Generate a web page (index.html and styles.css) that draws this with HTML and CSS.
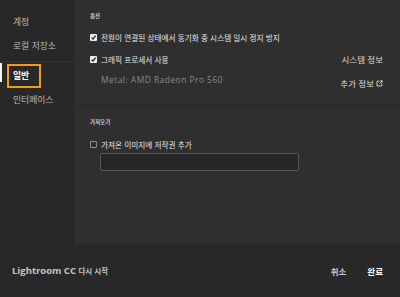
FILE: index.html
```html
<!DOCTYPE html>
<html lang="ko">
<head>
<meta charset="utf-8">
<title>환경 설정</title>
<link rel="stylesheet" href="styles.css">
</head>
<body>
<div class="app">
  <div class="main-area">
    <nav class="sidebar">
      <div class="nav-item">계정</div>
      <div class="nav-item">로컬 저장소</div>
      <div class="nav-sep"></div>
      <div class="nav-item active"><span class="focus">일반</span></div>
      <div class="nav-item">인터페이스</div>
    </nav>
    <main class="panel">
      <section class="sec sec-options">
        <h3 class="sec-title">옵션</h3>
        <div class="sec-body">
          <div class="opts">
            <label class="check"><span class="box checked"><svg viewBox="0 0 7 7" width="7" height="7"><path d="M1.6 3.6 L3 5.1 L5.6 1.6" fill="none" stroke="#1e1e1e" stroke-width="1.3"/></svg></span>전원이 연결된 상태에서 동기화 중 시스템 일시 정지 방지</label>
            <label class="check"><span class="box checked"><svg viewBox="0 0 7 7" width="7" height="7"><path d="M1.6 3.6 L3 5.1 L5.6 1.6" fill="none" stroke="#1e1e1e" stroke-width="1.3"/></svg></span>그래픽 프로세서 사용</label>
            <div class="note">Metal: AMD Radeon Pro 560</div>
          </div>
          <div class="links">
            <a class="link">시스템 정보</a>
            <a class="link">추가 정보<svg class="ext" viewBox="0 0 7 7" width="7" height="7"><path d="M3.5 1.2 H1 V6 H5.8 V3.5" fill="none" stroke="#dcdcdc" stroke-width="0.9"/><path d="M3.4 3.6 L6.2 0.8 M4.3 0.8 H6.2 V2.7" fill="none" stroke="#dcdcdc" stroke-width="0.9"/></svg></a>
          </div>
        </div>
      </section>
      <section class="sec sec-import">
        <h3 class="sec-title">가져오기</h3>
        <label class="check"><span class="box"></span>가져온 이미지에 저작권 추가</label>
        <div class="field"></div>
      </section>
    </main>
  </div>
  <footer class="footer">
    <span class="restart">Lightroom CC <span class="ko">다시 시작</span></span>
    <div class="actions">
      <span class="btn cancel">취소</span>
      <span class="btn done">완료</span>
    </div>
  </footer>
</div>
</body>
</html>
```
FILE: styles.css
```css
html, body {
  margin: 0;
  padding: 0;
  background: #282828;
}
body {
  font-family: "Noto Sans CJK KR", "Noto Sans", sans-serif;
  color: #e0e0e0;
}
.app {
  width: 400px;
  height: 297px;
  display: flex;
  flex-direction: column;
  background: #282828;
}
.main-area {
  display: flex;
  height: 244px;
}
.sidebar {
  width: 74px;
  flex: none;
  padding-top: 10px;
  box-sizing: border-box;
  background: #282828;
}
.nav-item {
  position: relative;
  height: 24px;
  line-height: 24px;
  padding-left: 13px;
  font-size: 8.8px;
  color: #b8b8b8;
  white-space: nowrap;
}
.nav-sep {
  height: 1px;
  margin-top: 3px;
  margin-bottom: 2px;
  background: #333333;
}
.nav-item.active {
  padding-left: 7px;
  color: #ffffff;
  font-weight: bold;
}
.nav-item.active::before {
  content: "";
  position: absolute;
  left: 0;
  top: -1px;
  width: 2px;
  height: 19px;
  background: #f2f2f2;
}
.focus {
  display: inline-block;
  box-sizing: border-box;
  width: 34px;
  height: 24px;
  line-height: 20px;
  padding-left: 4px;
  border: 2px solid #f39c12;
  vertical-align: top;
}
.panel {
  flex: 1;
  background: #2f2f2f;
}
.sec {
  box-sizing: border-box;
  padding: 11px 17px 0 16px;
}
.sec-options {
  height: 106px;
  border-bottom: 1px solid #282828;
}
.sec-title {
  margin: 0;
  font-size: 5.5px;
  line-height: 10px;
  font-weight: bold;
  color: #c8c8c8;
}
.sec-body {
  display: flex;
  justify-content: space-between;
  margin-top: 9px;
}
.opts {
  display: flex;
  flex-direction: column;
  gap: 8px;
}
.check {
  display: flex;
  align-items: center;
  gap: 4px;
  height: 14px;
  font-size: 7.65px;
  color: #e6e6e6;
  white-space: nowrap;
}
.box {
  width: 7px;
  height: 7px;
  box-sizing: border-box;
  flex: none;
  border: 1px solid #8e8e8e;
  border-radius: 1px;
}
.box.checked {
  border: none;
  background: #ececec;
  display: flex;
}
.note {
  height: 14px;
  line-height: 14px;
  margin-top: -1px;
  padding-left: 11px;
  font-family: "Open Sans", sans-serif;
  font-size: 8.4px;
  letter-spacing: 0.5px;
  color: #8a8a8a;
  white-space: nowrap;
}
.links {
  display: flex;
  flex-direction: column;
  align-items: flex-end;
  gap: 10px;
  padding-top: 22px;
}
.link {
  display: flex;
  align-items: center;
  gap: 2px;
  height: 14px;
  font-size: 8.5px;
  color: #dcdcdc;
  white-space: nowrap;
}
.ext {
  margin-top: 1px;
}
.sec-import {
  padding-top: 11px;
}
.sec-import .check {
  margin-top: 10px;
}
.field {
  width: 199px;
  height: 18px;
  box-sizing: border-box;
  margin: 2px 0 0 10px;
  border: 1px solid #575757;
  border-radius: 2px;
  background: #262626;
}
.footer {
  flex: 1;
  display: flex;
  align-items: center;
  justify-content: space-between;
  padding: 0 17px 0 12px;
  background: #282828;
  font-family: "Open Sans", "Noto Sans CJK KR", sans-serif;
  font-weight: bold;
}
.restart {
  font-size: 9.5px;
  color: #c4c4c4;
}
.restart .ko {
  font-family: "Noto Sans CJK KR", sans-serif;
  font-size: 7.5px;
}
.actions {
  display: flex;
  gap: 21px;
}
.btn {
  font-family: "Noto Sans CJK KR", sans-serif;
  font-size: 8.5px;
}
.cancel {
  color: #c8c8c8;
}
.done {
  color: #ffffff;
}
```
